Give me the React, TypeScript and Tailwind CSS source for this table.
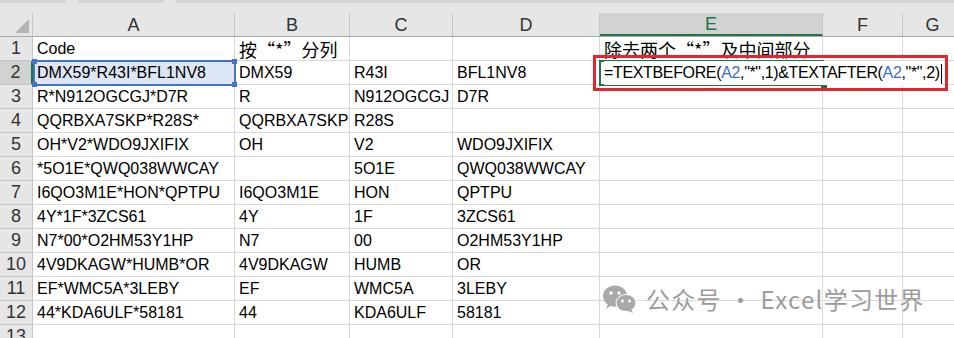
import React from "react";

const COLS = ["A", "B", "C", "D", "E", "F", "G"];
const WIDTHS = [202, 115, 103, 147, 223, 80, 60];

const ROWS: string[][] = [
  ["Code", "按“*”分列", "", "", "除去两个“*”及中间部分", "", ""],
  ["DMX59*R43I*BFL1NV8", "DMX59", "R43I", "BFL1NV8", "", "", ""],
  ["R*N912OGCGJ*D7R", "R", "N912OGCGJ", "D7R", "", "", ""],
  ["QQRBXA7SKP*R28S*", "QQRBXA7SKP", "R28S", "", "", "", ""],
  ["OH*V2*WDO9JXIFIX", "OH", "V2", "WDO9JXIFIX", "", "", ""],
  ["*5O1E*QWQ038WWCAY", "", "5O1E", "QWQ038WWCAY", "", "", ""],
  ["I6QO3M1E*HON*QPTPU", "I6QO3M1E", "HON", "QPTPU", "", "", ""],
  ["4Y*1F*3ZCS61", "4Y", "1F", "3ZCS61", "", "", ""],
  ["N7*00*O2HM53Y1HP", "N7", "00", "O2HM53Y1HP", "", "", ""],
  ["4V9DKAGW*HUMB*OR", "4V9DKAGW", "HUMB", "OR", "", "", ""],
  ["EF*WMC5A*3LEBY", "EF", "WMC5A", "3LEBY", "", "", ""],
  ["44*KDA6ULF*58181", "44", "KDA6ULF", "58181", "", "", ""],
  ["", "", "", "", "", "", ""],
];

const font = { fontFamily: '"Liberation Sans", "Noto Sans CJK SC", sans-serif' };
const cjk = { fontFamily: '"Noto Sans CJK SC", sans-serif' };

function Formula() {
  return (
    <span className="relative z-10 whitespace-nowrap bg-white tracking-[-0.35px]">
      =TEXTBEFORE(<span className="text-[#3c6ec8]">A2</span>,"*",1)&amp;TEXTAFTER(
      <span className="text-[#3c6ec8]">A2</span>,"*",2)
      <span className="ml-[1px] inline-block h-[20px] w-[1px] bg-black align-middle" />
    </span>
  );
}

function CellText({ v }: { v: string }) {
  // китайский текст с полноширинными кавычками
  if (/[\u4e00-\u9fff]/.test(v)) {
    return (
      <span className="text-[18px]" style={cjk}>
        {v}
      </span>
    );
  }
  return <>{v}</>;
}

/* значок WeChat для водяного знака */
function WeChat() {
  return (
    <svg width="36" height="30" viewBox="0 0 36 30" aria-hidden>
      <ellipse cx="13" cy="12" rx="12" ry="10.5" fill="#a9a9a9" />
      <path d="M6 20 L4 25 L10 21 Z" fill="#a9a9a9" />
      <circle cx="9" cy="9" r="1.7" fill="#fff" />
      <circle cx="17" cy="9" r="1.7" fill="#fff" />
      <ellipse cx="24" cy="19" rx="10.5" ry="9" fill="#fff" />
      <ellipse cx="24" cy="19" rx="9.5" ry="8" fill="#a9a9a9" />
      <path d="M29 25 L31 29 L25 26.5 Z" fill="#a9a9a9" />
      <circle cx="20.5" cy="17" r="1.4" fill="#fff" />
      <circle cx="27.5" cy="17" r="1.4" fill="#fff" />
    </svg>
  );
}

export default function App() {
  return (
    <div className="relative h-[338px] w-[954px] overflow-hidden bg-white text-[16px] text-black" style={font}>
      {/* полоска строки формул */}
      <div className="flex h-[13px] gap-[12px] bg-[#e6e6e6]">
        <div className="h-[3px] w-[66px] bg-[#d4d4d4]" />
        <div className="h-[3px] w-[86px] bg-[#d4d4d4]" />
        <div className="h-[3px] flex-1 bg-[#d4d4d4]" />
      </div>

      {/* заголовки столбцов */}
      <div className="flex h-[24px] border-b border-[#ababab] bg-[#e6e6e6] text-[18px] text-[#333]">
        <div className="relative w-[33px] shrink-0 border-r border-[#c6c6c6]">
          <div className="absolute bottom-[3px] right-[3px] h-0 w-0 border-b-[14px] border-l-[14px] border-b-[#b4b4b4] border-l-transparent" />
        </div>
        {COLS.map((c, i) => (
          <div
            key={c}
            style={{ width: WIDTHS[i] }}
            className={
              c === "E"
                ? "flex shrink-0 items-center justify-center border-b-2 border-r border-b-[#217346] border-r-[#c6c6c6] bg-[#d2d2d2] pt-[2px] text-[#217346]"
                : "flex shrink-0 items-center justify-center border-r border-[#c6c6c6] pt-[1px]"
            }
          >
            {c}
          </div>
        ))}
      </div>

      {/* строки */}
      {ROWS.map((row, r) => (
        <div key={r} className="flex h-[24px]">
          <div
            className={
              r === 1
                ? "flex w-[33px] shrink-0 items-center justify-center border-b border-r-2 border-b-[#c6c6c6] border-r-[#217346] bg-[#d2d2d2] text-[18px] text-[#333]"
                : "flex w-[33px] shrink-0 items-center justify-center border-b border-r border-[#c6c6c6] bg-[#e6e6e6] text-[18px] text-[#333]"
            }
          >
            {r + 1}
          </div>
          {row.map((v, c) => {
            const isA2 = r === 1 && c === 0;
            const isE2 = r === 1 && c === 4;
            return (
              <div
                key={c}
                style={{ width: WIDTHS[c] }}
                className={
                  (isE2 ? "border-b " : "border-b border-r ") +
                  "flex shrink-0 items-center overflow-visible whitespace-nowrap border-[#d9d9d9] pl-[4px] pt-[1px] " +
                  (isA2 ? "bg-[#dce6f4]" : "")
                }
              >
                {isE2 ? <Formula /> : <CellText v={v} />}
              </div>
            );
          })}
        </div>
      ))}

      {/* выделение A2 */}
      <div className="pointer-events-none absolute left-[33px] top-[60px] h-[26px] w-[203px] border-2 border-[#4472c4]">
        <span className="absolute -left-[3px] -top-[3px] h-[5px] w-[5px] bg-[#4472c4]" />
        <span className="absolute -right-[3px] -top-[3px] h-[5px] w-[5px] bg-[#4472c4]" />
        <span className="absolute -bottom-[3px] -left-[3px] h-[5px] w-[5px] bg-[#4472c4]" />
        <span className="absolute -bottom-[3px] -right-[3px] h-[5px] w-[5px] bg-[#4472c4]" />
      </div>

      {/* активная ячейка E2 */}
      <div className="pointer-events-none absolute left-[599px] top-[60px] h-[26px] w-[225px] border-y-2 border-l-2 border-[#217346]">
        <span className="absolute -bottom-[4px] -right-[3px] h-[6px] w-[6px] bg-[#217346]" />
      </div>

      {/* красная рамка */}
      <div className="pointer-events-none absolute left-[593px] top-[55px] h-[36px] w-[355px] border-[3px] border-[#e0262e]" />

      {/* водяной знак */}
      <div className="pointer-events-none absolute left-[602px] top-[284px] flex items-center gap-[8px] text-[24px] leading-none tracking-[1.3px] text-[#9c9c9c]" style={cjk}>
        <WeChat />
        <span>公众号 · Excel学习世界</span>
      </div>
    </div>
  );
}
